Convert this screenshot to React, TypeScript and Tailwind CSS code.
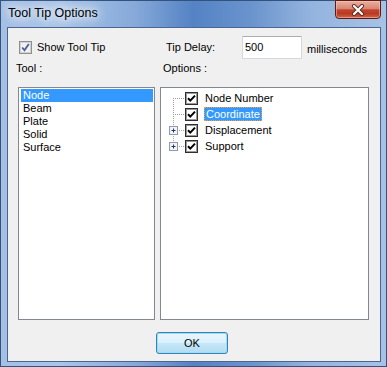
import React from "react";

const font = { fontFamily: '"Liberation Sans", Arial, sans-serif' };

function TreeCheck() {
  return (
    <svg width="13" height="13" viewBox="0 0 13 13" className="shrink-0">
      <rect x="0.5" y="0.5" width="12" height="12" fill="#ffffff" stroke="#2e2e2e" />
      <rect x="1.5" y="1.5" width="10" height="10" fill="none" stroke="#9a9a9a" />
      <path d="M3 6.2 L5.3 8.6 L10 3.6" fill="none" stroke="#000" strokeWidth="2" />
    </svg>
  );
}

function Connector({ first, last, plus }: { first?: boolean; last?: boolean; plus?: boolean }) {
  const y1 = first ? 8 : 0;
  const y2 = last ? 8 : 16;
  return (
    <svg width="24" height="16" viewBox="0 0 24 16" className="shrink-0">
      <line x1="12.5" y1={y1} x2="12.5" y2={y2} stroke="#a0a0a0" strokeDasharray="1 1" />
      <line x1="12" y1="8.5" x2="24" y2="8.5" stroke="#a0a0a0" strokeDasharray="1 1" />
      {plus && (
        <g>
          <rect x="8.5" y="4.5" width="8" height="8" fill="#f4f4f4" stroke="#8c9ab0" />
          <line x1="10.5" y1="8.5" x2="14.5" y2="8.5" stroke="#1c3a7a" />
          <line x1="12.5" y1="6.5" x2="12.5" y2="10.5" stroke="#1c3a7a" />
        </g>
      )}
    </svg>
  );
}

export default function App() {
  const tools = ["Node", "Beam", "Plate", "Solid", "Surface"];
  const opts = ["Node Number", "Coordinate", "Displacement", "Support"];
  return (
    <div
      className="relative w-[387px] h-[367px] flex flex-col border border-[#34527e] bg-[linear-gradient(90deg,#a4c0e5_0%,#a9c5e8_15%,#86a9da_35%,#5482c4_50%,#6a94cd_65%,#93b3de_80%,#a7c2e6_100%)] text-[11px] text-black"
      style={font}
    >
      <div className="h-[26px] flex items-start shrink-0">
        <span className="ml-[7px] mt-[5px] text-[12.5px] leading-[15px] text-black [text-shadow:0_0_8px_#ffffff,0_0_12px_#ffffff,0_0_14px_#ffffff]">
          Tool Tip Options
        </span>
        <div className="absolute top-[-1px] right-[5px] w-[46px] h-[19px] rounded-b-[4px] border border-[#5a1d12] bg-[linear-gradient(180deg,#e9b1a2_0%,#d98672_45%,#c2442c_52%,#b83a22_75%,#d3684c_100%)] flex items-center justify-center shadow-[inset_0_0_0_1px_rgba(255,200,190,0.5)]">
          <svg width="14" height="12" viewBox="0 0 14 12">
            <path d="M3 2 L11 10 M11 2 L3 10" stroke="#5a2a20" strokeWidth="4" strokeLinecap="round" />
            <path d="M3 2 L11 10 M11 2 L3 10" stroke="#ffffff" strokeWidth="2.2" strokeLinecap="round" />
          </svg>
        </div>
      </div>

      <div className="ml-[6px] mr-[5px] h-[335px] shrink-0 border border-[#4a6690] bg-[#f0f0f0] flex flex-col">
        {/* row 1 */}
        <div className="mt-[8px] h-[23px] flex items-center">
          <div className="w-[158px] flex items-center pl-[11px]">
            <svg width="13" height="13" viewBox="0 0 13 13" className="shrink-0">
              <rect x="0.5" y="0.5" width="12" height="12" fill="#e6e6e6" stroke="#8e8f8f" />
              <rect x="1.5" y="1.5" width="10" height="10" fill="#f1f1f1" stroke="#d2d2d2" />
              <path d="M3.2 6.5 L5.5 9.3 L9.8 3" fill="none" stroke="#4a5f96" strokeWidth="1.8" />
            </svg>
            <span className="ml-[5px]">Show Tool Tip</span>
          </div>
          <div className="w-[76px]">Tip Delay:</div>
          <div className="w-[60px] h-[23px] bg-white border border-[#d5d9de] border-t-[#abadb3] flex items-center pl-[2px]">
            500
          </div>
          <span className="ml-[5px] mt-[3px]">milliseconds</span>
        </div>

        {/* row 2 */}
        <div className="mt-[3px] h-[13px] leading-[13px] flex">
          <div className="w-[155px] pl-[8px]">Tool :</div>
          <div>Options :</div>
        </div>

        {/* row 3 */}
        <div className="mt-[12px] h-[233px] flex ml-[10px] gap-[5px]">
          <div className="w-[137px] h-full bg-white border border-[#828790] pt-[1px] pl-[2px] pr-[1px]">
            {tools.map((t, i) => (
              <div
                key={t}
                className={
                  "h-[13px] leading-[13px] pl-[2px] " +
                  (i === 0 ? "bg-[#3399ff] text-white" : "")
                }
              >
                {t}
              </div>
            ))}
          </div>
          <div className="w-[209px] h-full bg-white border border-[#828790] pt-[2px]">
            {opts.map((o, i) => (
              <div key={o} className="h-[16px] flex items-center">
                <Connector first={i === 0} last={i === opts.length - 1} plus={i >= 2} />
                <TreeCheck />
                {i === 1 ? (
                  <span className="ml-[6px] h-[14px] leading-[12px] px-[1px] bg-[#3399ff] text-white border border-dotted border-[#f0a040]">
                    {o}
                  </span>
                ) : (
                  <span className="ml-[7px] leading-[13px]">{o}</span>
                )}
              </div>
            ))}
          </div>
        </div>

        {/* row 4 */}
        <div className="mt-[12px] flex pl-[148px]">
          <div className="w-[72px] h-[22px] rounded-[3px] border border-[#3c7fb1] bg-[linear-gradient(180deg,#e8f6fd_0%,#dbf1fc_48%,#c4e6f8_52%,#b2ddf4_100%)] shadow-[inset_0_0_0_1px_#98e0fa] flex items-center justify-center text-[11px]">
            OK
          </div>
        </div>
      </div>
    </div>
  );
}
